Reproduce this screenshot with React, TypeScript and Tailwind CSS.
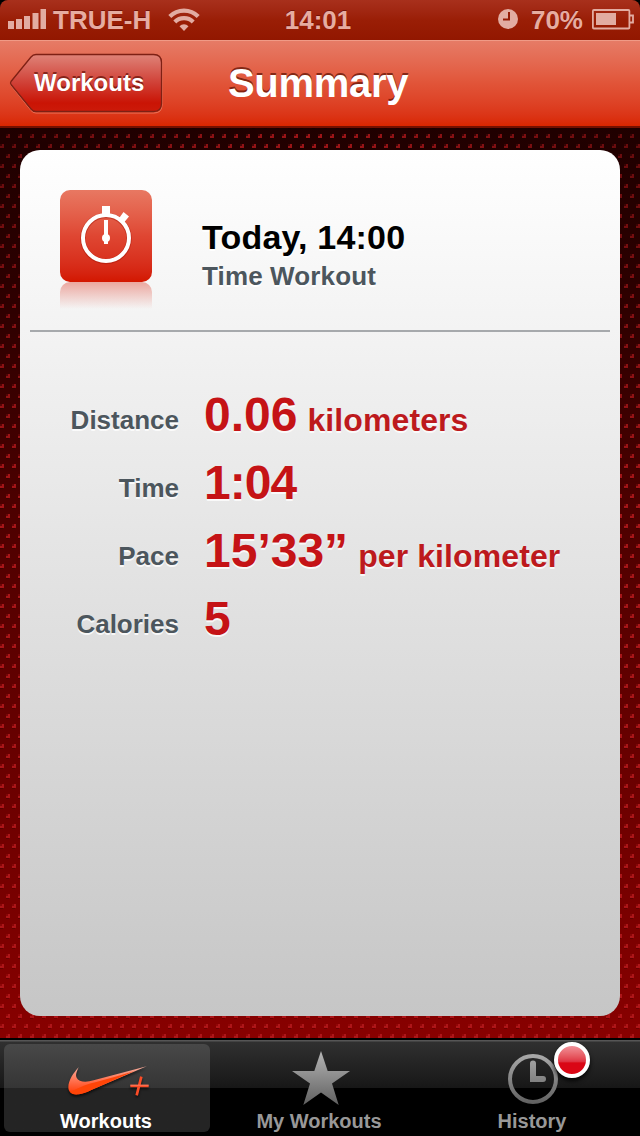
import { clsx } from 'clsx'
import type { ReactNode } from 'react'

interface Stat {
  label: string
  value: string
  unit?: string
  tight?: boolean
}

const STATS: Stat[] = [
  { label: 'Distance', value: '0.06', unit: 'kilometers' },
  { label: 'Time', value: '1:04', tight: true },
  { label: 'Pace', value: '15’33”', unit: 'per kilometer' },
  { label: 'Calories', value: '5' },
]

const StatusBar = () => (
  <div className="bg-black">
    <div className="flex h-10 items-center rounded-t-lg bg-linear-to-b from-[#a8301c] via-[#9a1e06] to-[#921700] text-[26px] leading-10 text-[#e6aca1] text-shadow-[0_-1px_0_rgba(70,0,0,0.5)]">
      <div className="flex flex-1 items-center">
        <svg className="ml-2 h-10 w-10" viewBox="0 0 40 40" fill="#e2aca2">
          <path d="M0 21h6v8H0zM8 19h6v10H8zM16 16h6v13h-6zM24.500 13h6v16h-6zM32.500 9h5.500v20h-5.500z" />
        </svg>
        <span className="ml-[5px]">TRUE-H</span>
        <svg className="ml-[17px] h-10 w-8" viewBox="0 0 32 40" fill="none" stroke="#e2aca2" strokeWidth="4.200">
          <path d="M1.800 16.500a20 20 0 0 1 28.400 0M6.800 22a13 13 0 0 1 18.400 0" />
          <path d="M16 31l-4.500-4.800a6.400 6.400 0 0 1 9 0z" fill="#e2aca2" stroke="none" />
        </svg>
      </div>
      <span className="-ml-1">14:01</span>
      <div className="flex flex-1 items-center justify-end">
        <svg className="mr-3 h-10 w-[22px]" viewBox="0 0 22 40">
          <circle cx="11" cy="19" r="10" fill="#e2aca2" />
          <path d="M12 12v7.500H6" fill="none" stroke="#941a05" strokeWidth="2" />
        </svg>
        <span>70%</span>
        <svg className="mr-1.5 ml-[9px] h-10 w-[42px]" viewBox="0 0 42 40" fill="none" stroke="#e2aca2" strokeWidth="1.800">
          <rect x="0.900" y="10" width="36.500" height="18.500" rx="1" />
          <path d="M38 15.500h3v7h-3" />
          <path d="M4 13h20v12H4z" fill="#e2aca2" stroke="none" />
        </svg>
      </div>
    </div>
  </div>
)

const NavBar = () => (
  <div className="relative h-[88px] border-t border-b-2 border-t-[#f09a86] border-b-[#741000] bg-linear-to-b from-[#e67b66] via-[#e15438] to-[#d92600]">
    <h1 className="pr-1 text-center text-[40px] leading-[84px] tracking-[-0.3px] text-white text-shadow-[0_-2px_0_rgba(90,15,0,0.7)]">
      Summary
    </h1>
    <button className="absolute top-[11px] left-[9px] h-[63px] w-[155px]">
      <svg className="absolute inset-0" width="155" height="63" viewBox="0 0 155 63">
        <defs>
          <linearGradient id="back" x1="0" y1="0" x2="0" y2="1">
            <stop offset="0" stopColor="#df8378" />
            <stop offset="0.5" stopColor="#d04036" />
            <stop offset="0.850" stopColor="#ca1405" />
            <stop offset="1" stopColor="#cc1a09" />
          </linearGradient>
        </defs>
        <path
          d="M27 3.500H145Q153 3.500 153 11.500V53Q153 61 145 61H27Q24 61 22 58.500L2 33.500Q1 32.300 2 31L22 6Q24 3.500 27 3.500Z"
          fill="none"
          stroke="#f0866d"
          strokeOpacity="0.8"
        />
        <path
          d="M27 2.500H144.500Q152.500 2.500 152.500 10.500V51.500Q152.500 59.500 144.500 59.500H27Q24 59.500 22 57L2 32.500Q1 31 2 29.500L22 5Q24 2.500 27 2.500Z"
          fill="url(#back)"
          stroke="#7e2014"
          strokeWidth="1.300"
        />
      </svg>
      <span className="absolute top-4 left-[25px] text-2xl leading-[30px] text-white text-shadow-[0_-2px_0_rgba(90,10,0,0.65)]">
        Workouts
      </span>
    </button>
  </div>
)

const Stopwatch = () => (
  <svg className="h-[92px] w-[92px]" viewBox="0 0 92 92" fill="none" stroke="#fff">
    <circle cx="46" cy="48.500" r="23" stroke="#a81708" strokeOpacity="0.5" strokeWidth="5.500" />
    <circle cx="46" cy="48" r="23" strokeWidth="4" />
    <path d="M42 16h8v9h-8zM58.500 29l5-7 5.500 4.500-5 6z" fill="#fff" stroke="none" />
    <path d="M46 30v24" strokeWidth="4" />
    <circle cx="46" cy="48" r="4" fill="#fff" stroke="none" />
  </svg>
)

const SummaryCard = () => (
  <div className="h-[866px] rounded-[20px] bg-linear-to-b from-white to-[#c6c6c6] px-2.5">
    <div className="flex h-[182px] border-b-2 border-[#a6a9ac] pt-10 pl-[30px]">
      <div>
        <div className="h-[92px] w-[92px] rounded-[10px] bg-linear-to-b from-[#e87862] via-[#df4632] to-[#d31600]">
          <Stopwatch />
        </div>
        <div className="h-[27px] w-[92px] rounded-t-[10px] bg-linear-to-b from-[#eba79f] to-transparent" />
      </div>
      <div className="ml-[50px] pt-[27px] text-shadow-[0_2px_0_#fff]">
        <h2 className="text-[34px] leading-10 tracking-[0.2px] text-black">Today, 14:00</h2>
        <p className="text-[26px] leading-[38px] tracking-[0.13px] text-[#4c565d]">Time Workout</p>
      </div>
    </div>
    <div className="pt-[47px]">
      {STATS.map(stat => (
        <div key={stat.label} className="flex h-[68px] items-baseline text-shadow-[0_2px_0_rgba(255,255,255,0.8)]">
          <span className="w-[149px] text-right text-[26px] text-[#4c565d]">{stat.label}</span>
          <span
            className={clsx(
              'relative top-0.5 ml-[25px] text-5xl leading-[68px] text-[#c51316]',
              stat.tight && 'tracking-[-1px]'
            )}
          >
            {stat.value}
          </span>
          {stat.unit && <span className="relative top-0.5 ml-2.5 text-[32px] tracking-[0.1px] text-[#bd1a1d]">{stat.unit}</span>}
        </div>
      ))}
    </div>
  </div>
)

const SwooshIcon = () => (
  <svg className="h-[38px] w-[84px] drop-shadow-[0_2px_1px_rgba(0,0,0,0.6)]" viewBox="0 0 252 114">
    <defs>
      <linearGradient id="swoosh" x1="0" y1="0" x2="0" y2="1">
        <stop offset="0" stopColor="#f6afa0" />
        <stop offset="0.5" stopColor="#ff7352" />
        <stop offset="1" stopColor="#ff3600" />
      </linearGradient>
    </defs>
    <path
      d="M32 4C17 20 1 43 1 64C1 80 13 87 31 85C45 84 58 78 70 72L236 1L77 43C53 50 32 48 26 35C22 27 26 17 32 4Z"
      fill="url(#swoosh)"
    />
    <path d="M5 76C25 73 46 56 82 49Q145 32 198 16L70 72C39 87 13 91 5 76Z" fill="#ff4508" />
    <path d="M220 32L206 88M187 60H242" stroke="#fb4c27" strokeWidth="8" />
    <path d="M187 57.500H242" stroke="#ff9a80" strokeWidth="2" />
  </svg>
)

const StarIcon = () => (
  <svg className="h-[54px] w-[58px]" viewBox="0 0 58 54">
    <defs>
      <linearGradient id="grey" x1="0" y1="0" x2="0" y2="1">
        <stop offset="0" stopColor="#b5b5b5" />
        <stop offset="1" stopColor="#606060" />
      </linearGradient>
    </defs>
    <path d="M29 0l6.700 20H58L40 32.500 46.700 54 29 41.500 11.300 54 18 32.500 0 20h22.300z" fill="url(#grey)" />
  </svg>
)

const HistoryIcon = () => (
  <svg className="h-[50px] w-[50px]" viewBox="0 0 50 50" fill="none">
    <defs>
      <linearGradient id="clock" gradientUnits="userSpaceOnUse" x1="0" y1="0" x2="0" y2="50">
        <stop offset="0" stopColor="#aaa" />
        <stop offset="1" stopColor="#606060" />
      </linearGradient>
    </defs>
    <circle cx="25" cy="25" r="23" stroke="url(#clock)" strokeWidth="4" />
    <path d="M22 9.500a3 3 0 0 1 6 0V22h7a3 3 0 0 1 0 6H22z" fill="url(#clock)" />
  </svg>
)

interface TabProps {
  label: string
  icon: ReactNode
  active?: boolean
  badge?: boolean
}

const Tab = ({ label, icon, active, badge }: TabProps) => (
  <button
    className={clsx(
      'relative flex h-[88px] w-[206px] flex-col items-center rounded-md pr-0.5 text-xl',
      active
        ? 'bg-linear-to-b from-[#484848] from-0% via-[#353535] via-50% to-[#242424] to-50% text-white'
        : 'text-[#989898]'
    )}
  >
    <span className="flex h-[66px] items-center">{icon}</span>
    <span className="leading-[22px]">{label}</span>
    {badge && (
      <span className="absolute top-[-2px] left-[124px] h-9 w-9 rounded-full border-4 border-white bg-linear-to-b from-[#f09099] from-0% via-[#df3444] via-55% to-[#da0615] to-60% shadow-[0_3px_4px_rgba(0,0,0,0.8)]" />
    )}
  </button>
)

const TabBar = () => (
  <div className="h-[98px] border-t-2 border-black bg-[linear-gradient(to_bottom,#565656_0px,#565656_1px,#303030_2px,#171717_48px,#000_48px)] px-1 pt-1">
    <div className="flex justify-between">
      <Tab label="Workouts" active icon={<span className="mt-[15px] ml-2"><SwooshIcon /></span>} />
      <Tab label="My Workouts" icon={<span className="mt-0.5 ml-1"><StarIcon /></span>} />
      <Tab label="History" badge icon={<span className="mt-1 ml-0.5"><HistoryIcon /></span>} />
    </div>
  </div>
)

// Woven red mesh behind the card
const Mesh = () => (
  <svg className="absolute inset-0 h-full w-full">
    <defs>
      <pattern id="mesh" width="12" height="20" patternUnits="userSpaceOnUse">
        <path d="M8 6h2v4H8zM6 8h2v2H6zM2 16h2v4H2zM0 18h2v2H0z" fill="#b5191c" fillOpacity="0.850" />
        <path d="M6 6h2v2H6zM0 16h2v2H0z" fill="#b5191c" fillOpacity="0.250" />
        <path d="M6 10h3v1H6zM0 0h3v1H0z" fill="#000" fillOpacity="0.200" />
      </pattern>
      <radialGradient id="glow" gradientUnits="userSpaceOnUse" cx="320" cy="0" r="340">
        <stop offset="0" stopColor="#200000" stopOpacity="0" />
        <stop offset="1" stopColor="#200000" stopOpacity="0.500" />
      </radialGradient>
      <linearGradient id="fade" x1="0" y1="0" x2="0" y2="1">
        <stop offset="0" stopColor="#fff" />
        <stop offset="0.400" stopColor="#fff" stopOpacity="0" />
      </linearGradient>
      <mask id="top">
        <rect width="640" height="910" fill="url(#fade)" />
      </mask>
    </defs>
    <rect width="640" height="910" fill="url(#mesh)" />
    <rect width="640" height="910" fill="url(#glow)" mask="url(#top)" />
  </svg>
)

export default function App() {
  return (
    <div className="flex h-[1136px] w-[640px] flex-col overflow-hidden bg-black font-['Liberation_Sans',Arial,sans-serif] font-bold">
      <StatusBar />
      <NavBar />
      <main className="relative h-[910px] bg-linear-to-b from-[#200000] via-[#560000] to-[#880000] px-5 pt-[22px]">
        <Mesh />
        <div className="relative">
          <SummaryCard />
        </div>
      </main>
      <TabBar />
    </div>
  )
}
